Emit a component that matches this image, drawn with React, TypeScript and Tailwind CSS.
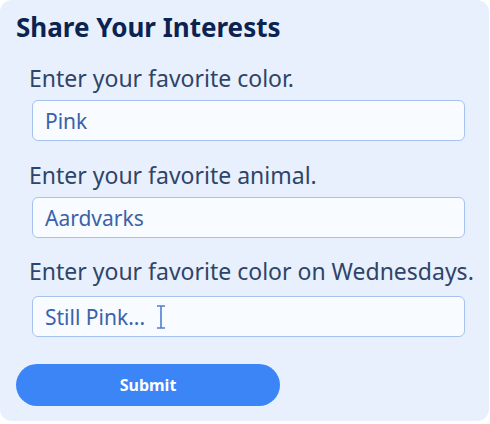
import React from "react"

const fields = [
  { label: "Enter your favorite color.", value: "Pink", gap: "mt-[20px]", inputGap: "mt-[7px]" },
  { label: "Enter your favorite animal.", value: "Aardvarks", gap: "mt-[19px]", inputGap: "mt-[7px]" },
  { label: "Enter your favorite color on Wednesdays.", value: "Still Pink...", gap: "mt-[18px]", inputGap: "mt-[10px]" },
]

export default function App() {
  return (
    <div className="w-[490px] h-[424px] bg-white" style={{ fontFamily: "'Noto Sans', sans-serif" }}>
      <div className="w-[489px] h-[421px] rounded-[12px] bg-[#e8f0fd] px-4 pt-[11px]">
        <h1 className="text-[26px] leading-[32px] font-bold text-[#0b2350]">Share Your Interests</h1>

        <div className="flex flex-col pl-[13px]">
          {fields.map((f, i) => (
            <div key={i} className={`flex flex-col ${f.gap}`}>
              <label className="text-[23px] leading-[30px] text-[#2f4468] whitespace-nowrap">{f.label}</label>
              <div className={`relative ml-[3px] ${f.inputGap}`}>
                <input
                  type="text"
                  defaultValue={f.value}
                  className="w-[433px] h-[41px] rounded-[6px] border border-[#a6c3ef] bg-[#f8fbff] px-3 text-[21px] text-[#3a62a8] outline-none"
                />
                {i === 2 && (
                  <svg className="absolute left-[123px] top-[9px]" width="12" height="24" viewBox="0 0 12 24">
                    <path d="M2 1h8M6 1v22M2 23h8" stroke="#4f7fd0" strokeWidth="1.6" fill="none" />
                  </svg>
                )}
              </div>
            </div>
          ))}
        </div>

        <button className="mt-[27px] w-[264px] h-[42px] rounded-full bg-[#3b85f6] text-white text-[16px] font-bold">
          Submit
        </button>
      </div>
    </div>
  )
}
